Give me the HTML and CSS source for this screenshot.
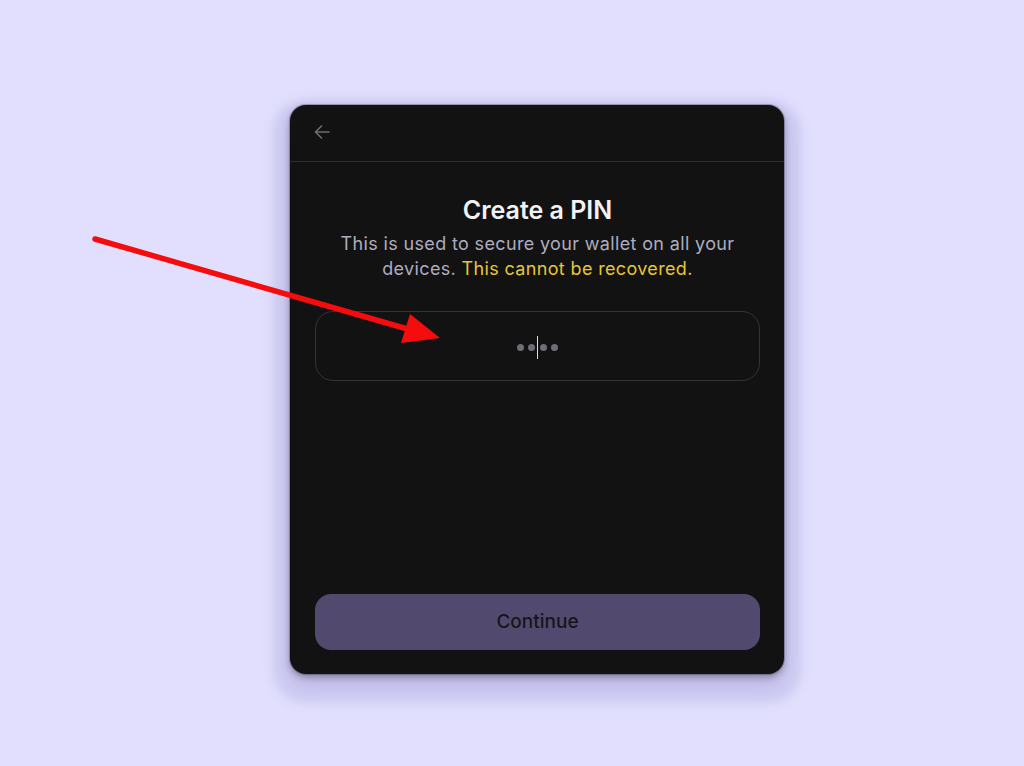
FILE: index.html
```html
<!DOCTYPE html>
<html>
<head>
<meta charset="utf-8">
<link rel="stylesheet" href="styles.css">
</head>
<body>
<div class="card">
  <div class="header">
    <svg class="back" width="20" height="20" viewBox="0 0 20 20" fill="none" stroke="#6e6e6e" stroke-width="1.6" stroke-linecap="round" stroke-linejoin="round">
      <path d="M17 10H3.5M9.5 4L3.5 10l6 6"/>
    </svg>
  </div>
  <div class="content">
    <h1 class="title">Create a PIN</h1>
    <p class="subtitle">This is used to secure your wallet on all your devices. <span class="warn">This cannot be recovered.</span></p>
    <div class="pin">
      <span class="dot"></span><span class="dot"></span><span class="caret"></span><span class="dot"></span><span class="dot"></span>
    </div>
    <button class="continue">Continue</button>
  </div>
</div>
<svg class="annotation" width="1024" height="766" viewBox="0 0 1024 766">
  <line x1="95" y1="239" x2="418" y2="332" stroke="#f50c0c" stroke-width="5.5" stroke-linecap="round"/>
  <polygon points="410,314 440,338 401,343" fill="#f50c0c"/>
</svg>
</body>
</html>
```

FILE: styles.css
```css
html, body {
  margin: 0;
  padding: 0;
}
body {
  background: #e1dffd;
  width: 1024px;
  height: 766px;
  overflow: hidden;
  position: relative;
  font-family: Inter, "Noto Sans", sans-serif;
  padding: 105px 0 0 290px;
  box-sizing: border-box;
}
.card {
  width: 494px;
  height: 569px;
  background: #121212;
  border-radius: 16px;
  box-shadow: 0 0 0 1px rgba(60,60,80,0.35), 0 3px 6px rgba(30,30,50,0.35), 0 10px 20px rgba(70,60,130,0.2), 0 12px 8px 18px rgba(190,186,232,0.45);
  display: flex;
  flex-direction: column;
  box-sizing: border-box;
}
.header {
  height: 57px;
  border-bottom: 1px solid #2d2d2d;
  display: flex;
  align-items: center;
  padding-left: 22px;
  padding-bottom: 2px;
  box-sizing: border-box;
}
.back {
  display: block;
}
.content {
  flex: 1;
  display: flex;
  flex-direction: column;
  padding: 32px 24px 24px 25px;
}
.title {
  margin: 0;
  font-size: 25px;
  line-height: 32px;
  font-weight: 600;
  color: #f2f2f2;
  text-align: center;
}
.subtitle {
  margin: 5px 10px 0;
  font-size: 18px;
  line-height: 25px;
  letter-spacing: 0.35px;
  color: #aeacbf;
  text-align: center;
}
.warn {
  color: #e6c63a;
}
.pin {
  margin-top: 30px;
  height: 70px;
  border: 1px solid #353238;
  border-radius: 18px;
  box-sizing: border-box;
  display: flex;
  align-items: center;
  justify-content: center;
  gap: 4px;
  padding-top: 2px;
}
.dot {
  width: 7px;
  height: 7px;
  border-radius: 50%;
  background: #6f6d75;
}
.caret {
  width: 1px;
  height: 23px;
  background: #d8d6f0;
  margin: 0 -2px;
}
.continue {
  margin-top: auto;
  height: 56px;
  width: 100%;
  border: none;
  border-radius: 16px;
  background: #514a6e;
  color: #17151b;
  font-family: Inter, "Noto Sans", sans-serif;
  font-size: 19px;
  font-weight: 500;
  padding-bottom: 3px;
}
.annotation {
  position: absolute;
  left: 0;
  top: 0;
  pointer-events: none;
}
```
